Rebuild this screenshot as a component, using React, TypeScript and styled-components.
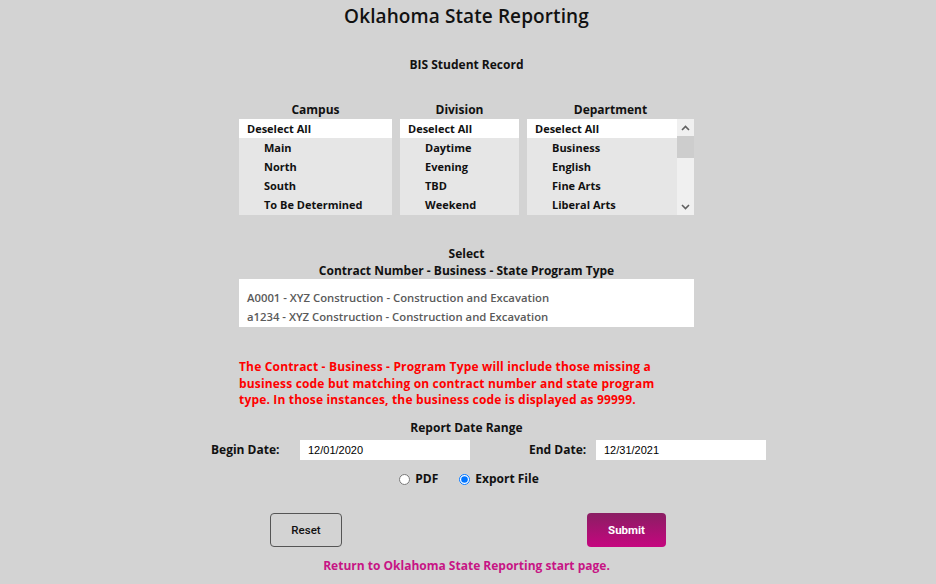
import React from "react";
import styled, { createGlobalStyle } from "styled-components";

const Global = createGlobalStyle`
  html, body { margin: 0; padding: 0; background: #d3d3d3; }
  body { font-family: "Open Sans", "DejaVu Sans", sans-serif; color: #111; }
  * { box-sizing: border-box; }
`;

const Page = styled.div`
  width: 936px;
  height: 584px;
  padding-right: 3px;
  display: flex;
  flex-direction: column;
  align-items: center;
  overflow: hidden;
`;

const Title = styled.h1`
  margin: 3px 0 0;
  font-size: 19px;
  line-height: 26px;
  font-weight: 600;
  letter-spacing: 0.1px;
`;

const Sub = styled.div<{ mt?: number }>`
  margin-top: ${(p) => p.mt ?? 0}px;
  font-size: 12px;
  line-height: 17px;
  font-weight: 700;
  text-align: center;
`;

const Lists = styled.div`
  margin-top: 28px;
  display: flex;
  gap: 8px;
  width: 455px;
`;

const ListCol = styled.div<{ w: number }>`
  width: ${(p) => p.w}px;
  display: flex;
  flex-direction: column;
`;

const ListHead = styled.div`
  font-size: 12px;
  font-weight: 700;
  line-height: 18px;
  text-align: center;
`;

const ListBox = styled.div`
  height: 96px;
  display: flex;
  background: #e6e6e6;
`;

const Items = styled.div`
  flex: 1;
  display: flex;
  flex-direction: column;
`;

const Item = styled.div<{ top?: boolean }>`
  height: 19px;
  line-height: 19px;
  font-size: 11px;
  font-weight: 700;
  padding-left: ${(p) => (p.top ? 8 : 25)}px;
  background: ${(p) => (p.top ? "#ffffff" : "transparent")};
  white-space: nowrap;
  color: #111;
`;

const Scroll = styled.div`
  width: 17px;
  background: #f0f0f0;
  display: flex;
  flex-direction: column;
`;

const Arrow = styled.div`
  height: 17px;
  display: flex;
  align-items: center;
  justify-content: center;
`;

const Thumb = styled.div`
  height: 22px;
  background: #cdcdcd;
`;

const ScrollFill = styled.div`
  flex: 1;
`;

const ContractBox = styled.div`
  width: 455px;
  height: 48px;
  background: #fff;
  padding-top: 9px;
`;

const ContractItem = styled.div`
  height: 19px;
  line-height: 19px;
  padding-left: 8px;
  font-size: 11.3px;
  font-weight: 600;
  color: #5a5a5a;
`;

const Note = styled.p`
  width: 455px;
  padding-right: 10px;
  margin: 32px 0 0;
  color: #ff0000;
  font-size: 12px;
  line-height: 16.5px;
  font-weight: 700;
  letter-spacing: 0.17px;
`;

const DateRow = styled.div`
  align-self: flex-start;
  margin-left: 211px;
  margin-top: 4px;
  display: flex;
  align-items: center;
`;

const DateLabel = styled.label<{ w: number }>`
  width: ${(p) => p.w}px;
  font-size: 12px;
  font-weight: 700;
`;

const DateInput = styled.div<{ mr?: number }>`
  width: 170px;
  height: 20px;
  background: #fff;
  padding-left: 8px;
  font-family: "Liberation Sans", Arial, sans-serif;
  font-size: 11px;
  line-height: 20px;
  color: #000;
  margin-right: ${(p) => p.mr ?? 0}px;
`;

const RadioRow = styled.div`
  margin-top: 10px;
  padding-left: 5px;
  display: flex;
  align-items: center;
  gap: 21px;
`;

const RadioLabel = styled.label`
  display: flex;
  align-items: center;
  font-size: 12px;
  font-weight: 700;
  input { margin: 2px 5px 0 0; width: 11px; height: 11px; }
`;

const ButtonRow = styled.div`
  width: 396px;
  margin-top: 26px;
  margin-left: 3px;
  display: flex;
  justify-content: space-between;
`;

const ResetBtn = styled.button`
  width: 72px;
  height: 34px;
  border: 1px solid #555;
  border-radius: 4px;
  background: transparent;
  font-family: Roboto, "Liberation Sans", sans-serif;
  font-size: 11.5px;
  font-weight: 500;
  color: #111;
`;

const SubmitBtn = styled.button`
  width: 79px;
  height: 34px;
  border: none;
  border-radius: 4px;
  background: linear-gradient(#8a1e63, #c5067f);
  color: #fff;
  font-family: Roboto, "Liberation Sans", sans-serif;
  font-size: 11.5px;
  font-weight: 700;
`;

const ReturnLink = styled.a`
  margin-top: 10px;
  color: #c71585;
  font-size: 12px;
  font-weight: 700;
  text-decoration: none;
`;

const Chevron = ({ up }: { up?: boolean }) => (
  <svg width="9" height="6" viewBox="0 0 9 6">
    <path
      d={up ? "M1 5 L4.5 1.5 L8 5" : "M1 1 L4.5 4.5 L8 1"}
      fill="none"
      stroke="#606060"
      strokeWidth="1.6"
    />
  </svg>
);

export default function App() {
  return (
    <Page>
      <Global />
      <Title>Oklahoma State Reporting</Title>
      <Sub mt={27}>BIS Student Record</Sub>
      <Lists>
        <ListCol w={153}>
          <ListHead>Campus</ListHead>
          <ListBox>
            <Items>
              <Item top>Deselect All</Item>
              <Item>Main</Item>
              <Item>North</Item>
              <Item>South</Item>
              <Item>To Be Determined</Item>
            </Items>
          </ListBox>
        </ListCol>
        <ListCol w={119}>
          <ListHead>Division</ListHead>
          <ListBox>
            <Items>
              <Item top>Deselect All</Item>
              <Item>Daytime</Item>
              <Item>Evening</Item>
              <Item>TBD</Item>
              <Item>Weekend</Item>
            </Items>
          </ListBox>
        </ListCol>
        <ListCol w={167}>
          <ListHead>Department</ListHead>
          <ListBox>
            <Items>
              <Item top>Deselect All</Item>
              <Item>Business</Item>
              <Item>English</Item>
              <Item>Fine Arts</Item>
              <Item>Liberal Arts</Item>
            </Items>
            <Scroll>
              <Arrow>
                <Chevron up />
              </Arrow>
              <Thumb />
              <ScrollFill />
              <Arrow>
                <Chevron />
              </Arrow>
            </Scroll>
          </ListBox>
        </ListCol>
      </Lists>
      <Sub mt={30}>Select</Sub>
      <Sub>Contract Number - Business - State Program Type</Sub>
      <ContractBox>
        <ContractItem>A0001 - XYZ Construction - Construction and Excavation</ContractItem>
        <ContractItem>a1234 - XYZ Construction - Construction and Excavation</ContractItem>
      </ContractBox>
      <Note>
        The Contract - Business - Program Type will include those missing a business code but
        matching on contract number and state program type. In those instances, the business
        code is displayed as 99999.
      </Note>
      <Sub mt={10}>Report Date Range</Sub>
      <DateRow>
        <DateLabel w={89}>Begin Date:</DateLabel>
        <DateInput mr={59}>12/01/2020</DateInput>
        <DateLabel w={67}>End Date:</DateLabel>
        <DateInput>12/31/2021</DateInput>
      </DateRow>
      <RadioRow>
        <RadioLabel>
          <input type="radio" name="fmt" />
          PDF
        </RadioLabel>
        <RadioLabel>
          <input type="radio" name="fmt" defaultChecked />
          Export File
        </RadioLabel>
      </RadioRow>
      <ButtonRow>
        <ResetBtn>Reset</ResetBtn>
        <SubmitBtn>Submit</SubmitBtn>
      </ButtonRow>
      <ReturnLink href="#">Return to Oklahoma State Reporting start page.</ReturnLink>
    </Page>
  );
}
